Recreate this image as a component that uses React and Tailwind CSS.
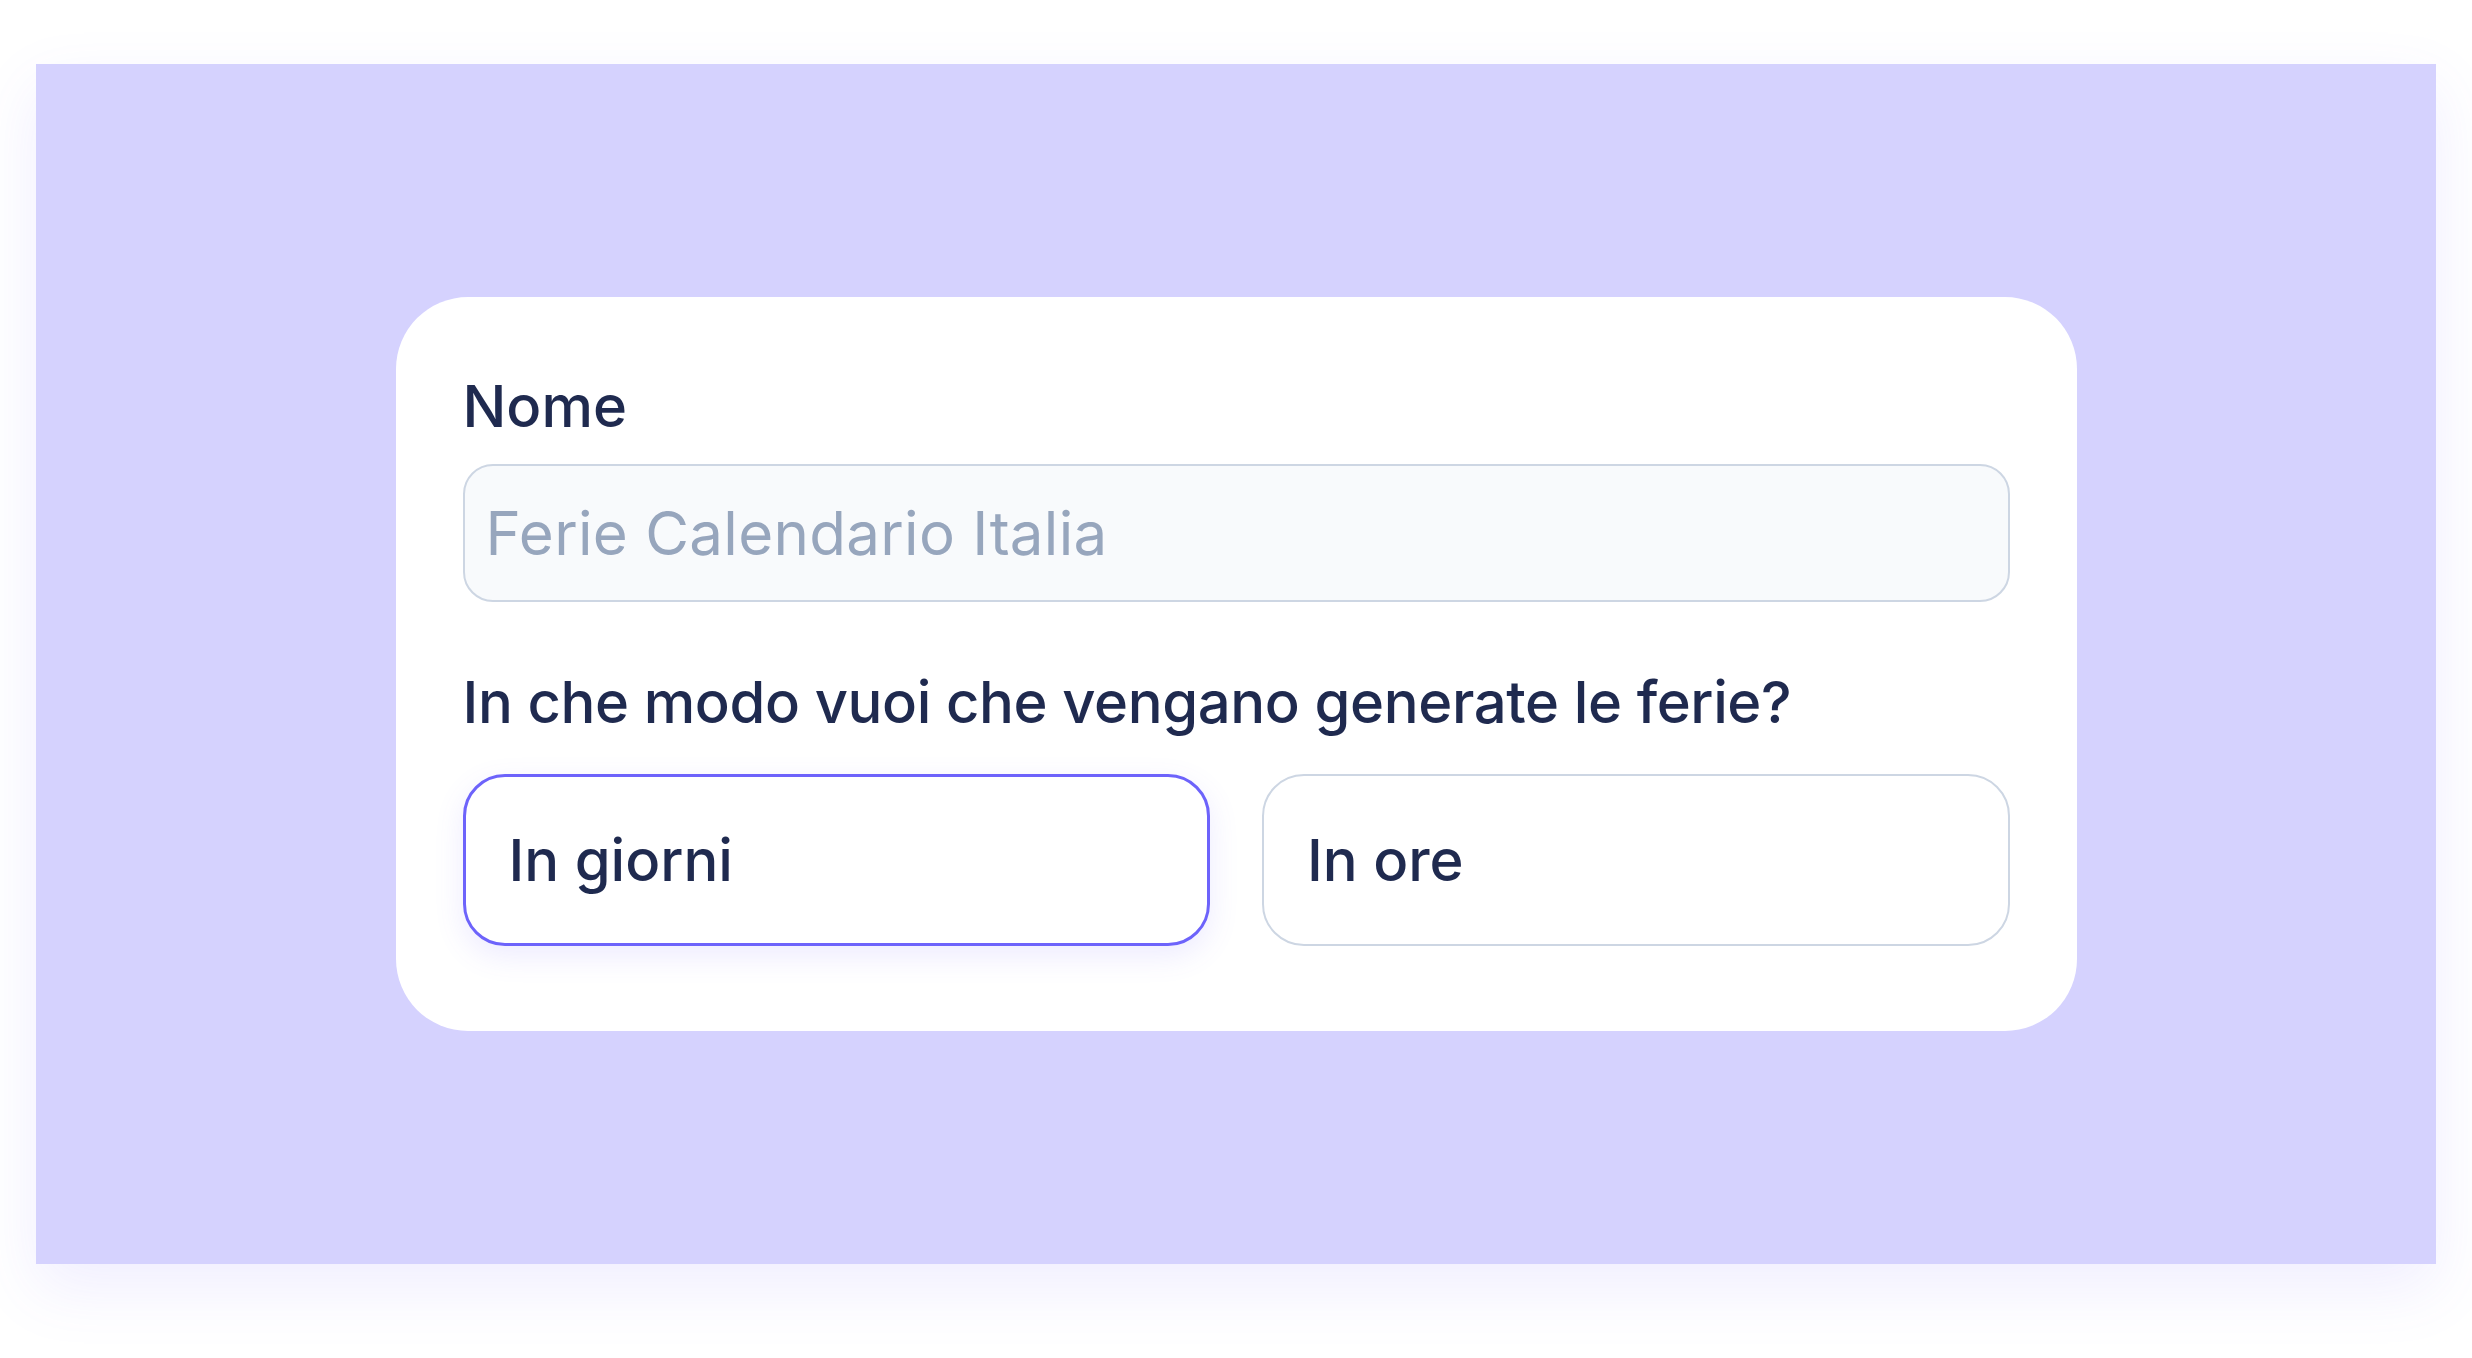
import React, { useState } from 'react';

const options = [
  { id: 'days', label: 'In giorni' },
  { id: 'hours', label: 'In ore' },
];

export default function App() {
  const [mode, setMode] = useState('days');

  return (
    <div className="w-full h-[1358px] bg-white pl-[36px] pt-[64px]" style={{ fontFamily: 'Inter, "Noto Sans", sans-serif' }}>
      <div className="w-[2400px] h-[1200px] bg-[#d5d2fe] flex items-center justify-center shadow-[0_24px_60px_rgba(109,93,252,0.10)]">
        <div className="w-[1681px] bg-white rounded-[72px] px-[67px] pt-[74px] pb-[85px]">
          <label className="block text-[58px] leading-[70px] font-medium text-[#1f2a4f]">Nome</label>
          <input
            type="text"
            placeholder="Ferie Calendario Italia"
            className="mt-[23px] w-full h-[138px] rounded-[30px] border-2 border-[#cdd6e3] bg-[#f8fafc] px-[21px] text-[60px] tracking-[0.3px] text-[#1f2a4f] placeholder:text-[#97a6bd] outline-none"
          />
          <p className="mt-[65px] text-[58px] leading-[70px] tracking-[-0.4px] font-medium text-[#1f2a4f]">
            In che modo vuoi che vengano generate le ferie?
          </p>
          <div className="mt-[37px] grid grid-cols-2 gap-[52px]">
            {options.map(opt => (
              <button
                key={opt.id}
                onClick={() => setMode(opt.id)}
                className={`h-[172px] rounded-[42px] bg-white text-left px-[43px] text-[58px] font-medium text-[#1f2a4f] ${
                  mode === opt.id
                    ? 'border-[3px] border-[#6d63fb] shadow-[0_10px_30px_rgba(109,93,252,0.12)]'
                    : 'border-2 border-[#cdd6e3]'
                }`}
              >
                {opt.label}
              </button>
            ))}
          </div>
        </div>
      </div>
    </div>
  );
}
